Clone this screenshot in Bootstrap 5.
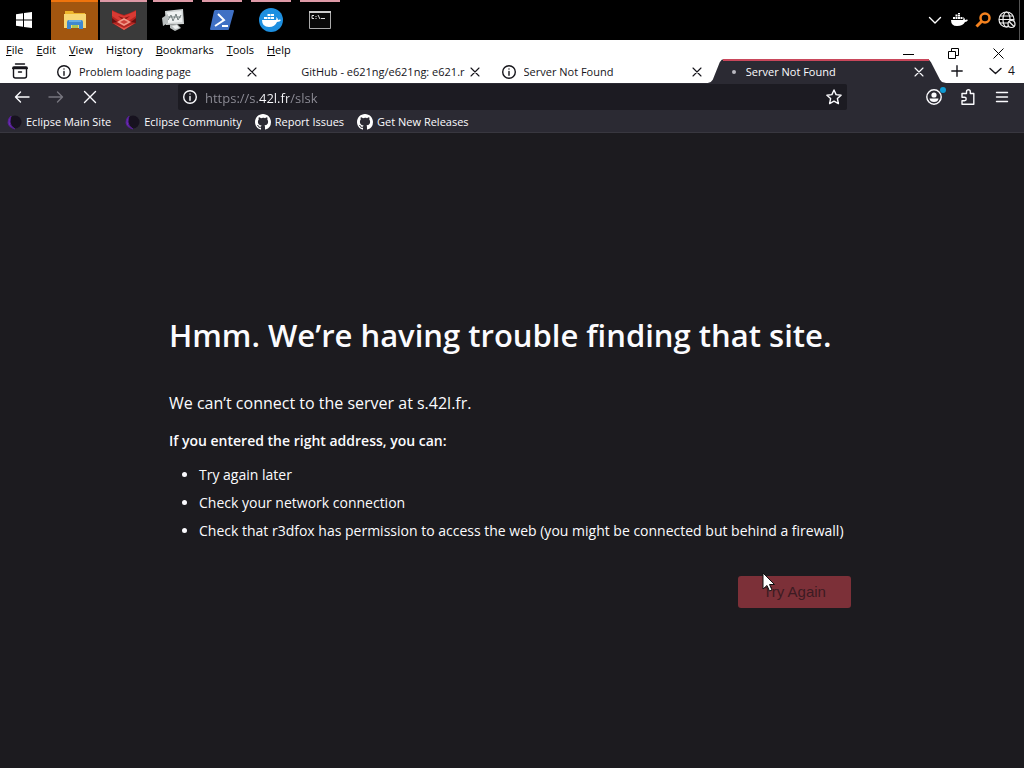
<!DOCTYPE html>
<html lang="en">
<head>
<meta charset="utf-8">
<meta name="viewport" content="width=device-width, initial-scale=1">
<title>Server Not Found</title>
<link href="https://cdn.jsdelivr.net/npm/bootstrap@5.3.0/dist/css/bootstrap.min.css" rel="stylesheet">
<style>
:root{--chrome:#2b2a33;--field:#1c1b22;--accent:#c9475b}
body{font-family:"Open Sans","Noto Sans",sans-serif;font-size:11px;line-height:16px;background:#1c1b1f;color:#fbfbfe}
button{background:none;border:0;padding:0;color:inherit;display:flex;align-items:center;justify-content:center}
svg{display:block;flex:none}
.ln{fill:none;stroke:currentColor;stroke-width:1.4;stroke-linecap:round;stroke-linejoin:round}
.taskbar{height:40px;background:#000;padding-right:4px}
.task{width:47px;height:40px;position:relative}
.task::before{content:"";position:absolute;top:0;left:4px;right:3px;height:2px;background:#dd99a6}
.task.start-btn::before{display:none}
.task.files{background:#a2560f}
.task.files::before{left:0;right:0;background:#f0740c}
.task.fox{background:#3a3a3a}
.task.fox::before{left:0;right:0}
.tray button{width:24px;height:40px}
.tray{border-right:1px solid #555}
.menus{background:#fff;color:#000;height:19px;padding-left:6px}
.menus button{margin-right:13px}
.menus .winbtn{width:45px;height:12px;margin:0}
.tabstrip{background:#fff;color:#15141a;height:24px}
.listall{width:39px;margin-right:6px}
.tab-item{position:relative;padding:1px 9px 0 12px;height:24px;min-width:0}
.tab-item .title{overflow:hidden;white-space:nowrap;flex:1 1 0;min-width:0;text-align:left}
.tab-item .glyph{width:14px;margin-right:8px;flex:none;display:flex;justify-content:center}
.tab-item.cur{color:#fbfbfe;isolation:isolate}
.tab-item.cur::before,.tab-item.cur::after{content:"";position:absolute;z-index:-1;inset:0 -12px 0 -4px;background:var(--chrome);
clip-path:polygon(0 100%,3px 96%,5px 86%,12px 14%,14px 3%,17px 0,calc(100% - 20px) 0,calc(100% - 17px) 3%,calc(100% - 15px) 14%,calc(100% - 6px) 86%,calc(100% - 4px) 96%,100% 100%)}
.tab-item.cur::after{inset:0 5px 22px 11px;background:var(--accent);clip-path:none}
.dot{width:4px;height:4px;border-radius:50%;background:#b9b8c0;margin-left:6px}
.newtab{width:46px}
.alltabs{width:44px;gap:6px;font-size:12px}
.navrow{background:var(--chrome);height:28px;padding:0 5px}
.navrow .tool{width:34px;height:28px;position:relative}
.urlbar{background:var(--field);height:26px;margin:0 70px 0 71px;padding:0 5px;border-radius:2px}
.urlbar input{border:0;outline:0;padding:2px 0 0;height:26px;font-size:13px;min-width:0;
background:linear-gradient(90deg,#8f8e98 0 54px,#fbfbfe 54px 84px,#8f8e98 84px) no-repeat;-webkit-background-clip:text;background-clip:text;-webkit-text-fill-color:transparent}
.notice{position:absolute;right:5px;top:4px;width:6px;height:6px;border-radius:50%;background:#0f9bd3}
.marks{background:var(--chrome);height:22px;padding:0 6px;gap:13px;border-bottom:1px solid #38373f}
.marks a{color:#fbfbfe;text-decoration:none;display:flex;align-items:center;gap:4px;white-space:nowrap}
.message{width:100%;max-width:686px;padding-top:20px}
h1{font-size:31px;line-height:44px;font-weight:600;margin:0 0 34px}
.lede{font-size:16px;line-height:24px;margin:0 0 16px}
.hint{font-size:14px;line-height:20px;font-weight:600;margin:0 0 12px}
.message ul{font-size:14px;line-height:24px;padding-left:30px;margin:0 0 33px}
.message li{margin-bottom:4px}
.message .retry{background:#7c3038;color:#3d1b22;width:113px;height:32px;border-radius:3px;font:15px/20px "Liberation Sans",sans-serif;margin-right:4px;position:relative}
.pointer{position:absolute;left:24px;top:-4px}
</style>
</head>
<body class="d-flex flex-column min-vh-100">
<header>
<div class="taskbar d-flex">
  <button class="task start-btn me-1" aria-label="Start"><svg width="16" height="16" viewBox="0 0 16 16" fill="#fff"><path d="M0 2.3 7 1.3V7.6H0zM8 1.1 16 0V7.6H8zM0 8.4H7V14.7L0 13.7zM8 8.4H16V16L8 14.9z"/></svg></button>
  <div class="d-flex flex-grow-1" style="gap:2px">
  <button class="task files" aria-label="Files"><svg width="24" height="20" viewBox="0 0 24 20"><path fill="#eeb52b" d="M2 1h8l1 2h11v3H2z"/><path fill="#f7d774" d="M1 4h22v14H1z"/><path fill="#3f88d0" d="M4 19v-7q0-2 2-2h12q2 0 2 2v7h-4v-4H8v4z"/><path fill="#67aee6" d="M6 10h12v2H6z"/><path fill="#a9c65a" d="M9 15h6v3H9z"/></svg></button>
  <button class="task fox" aria-label="r3dfox"><svg width="26" height="20" viewBox="0 0 26 20"><path fill="#b32420" d="M1 0 7 3l6 2 6-2 6-3v13l-12 7L1 13z"/><path fill="#d93a33" d="m1 1 12 5 12-5v5l-12 8L1 6z"/><path fill="#8e1916" d="m7 6 6 2 6-2-6 5z"/><path fill="#f29a88" d="m13 8 7 4-7 4-7-4z"/><path fill="#cf4038" d="m13 10 4 2-4 2-4-2z"/><path fill="#641010" d="m1 8 5 4-5 1zM25 8l-5 4 5 1z"/><path fill="#e4584c" d="m2 13 11 5 11-5-11 7z"/></svg></button>
  <button class="task" aria-label="Performance"><svg width="24" height="22" viewBox="0 0 24 22"><path fill="#cfd3d3" d="M4 2 22 0l1 15-18 1z"/><path fill="#eef1f1" d="M6 3.500 20.500 2l.7 11L7 14z"/><path fill="none" stroke="#758080" d="m7 11 3-5 2 6 3-7 2 6 3-5M7 8h13"/><path fill="#b9bebe" d="m1 9 6-4v9l-5 3zM9 16l7-1 4 4-6 3-5-3z"/><path fill="#edf0f0" d="m11 17 5-1 2 3-4 1z"/></svg></button>
  <button class="task" aria-label="PowerShell"><svg width="24" height="20" viewBox="0 0 24 20"><path fill="#3f70c4" d="M5 0h18q1 0 1 1l-5 18q0 1-1 1H1q-1 0-1-1L4 1z"/><path fill="none" stroke="#fff" stroke-width="2" d="m8 4 6 6-9 6M12 16h6"/></svg></button>
  <button class="task" aria-label="Docker"><svg width="24" height="24" viewBox="0 0 24 24"><circle cx="12" cy="12" r="12" fill="#1d8fe0"/><path fill="#fff" d="M3 12h14q1-1 0-3 2 1 2 3 2-1 3 0-1 2-4 2-2 5-8 5-7 0-7-7zM5 9h3v2H5zm3.500 0h3v2h-3zM12 9h3v2h-3zM8.500 6h3v2h-3zM12 6h3v2h-3z"/></svg></button>
  <button class="task" aria-label="Command Prompt"><svg width="24" height="20" viewBox="0 0 24 20"><path fill="#080808" stroke="#aaa" d="M1.500 1.500h21v17h-21z"/><path fill="#ccc" d="M1 1h22v2H1z"/><path fill="none" stroke="#ddd" d="M6 5.500H4v3h2M8 6v1M8 8v1M10 5l2 4M13 8.500h4"/></svg></button>
  </div>
  <div class="tray d-flex text-white">
    <button aria-label="Hidden icons"><svg class="ln" width="14" height="14" viewBox="0 0 14 14"><path d="m1.500 4.500 5.500 5.500 5.500-5.500"/></svg></button>
    <button aria-label="Docker"><svg width="17" height="14" viewBox="0 0 17 14" fill="#fff"><path d="M0 7h12q1-1 0-3 2 1 2 3 2-1 3 0-1 2-3 2-2 4-8 4-6 0-6-6zM2 4h2v2H2zM4.500 4h2v2h-2zM7 4h2v2H7zM9.500 4h2v2h-2zM4.500 1.500h2v2h-2zM7 1.500h2v2H7zM7 0h2v1H7z"/></svg></button>
    <button aria-label="Search everything"><svg width="16" height="16" viewBox="0 0 16 16" fill="none" stroke="#f4821f"><circle cx="10" cy="6" r="4.500" stroke-width="2.500"/><path d="m6.500 9.500-5 5" stroke-width="3"/></svg></button>
    <button aria-label="Network"><svg width="18" height="18" viewBox="0 0 18 18" fill="none" stroke="#eee" stroke-width="1.200"><circle cx="8.500" cy="8.500" r="7.500"/><ellipse cx="8.500" cy="8.500" rx="3.500" ry="7.500"/><path d="M1 8.500h15M2 5h13M2 12h13"/><circle cx="13.500" cy="13" r="3.500" fill="#000"/><path d="m11 10.500 5 5"/></svg></button>
  </div>
</div>

<nav class="menus d-flex" aria-label="Menu bar">
  <button><span><u>F</u>ile</span></button><button><span><u>E</u>dit</span></button><button><span><u>V</u>iew</span></button><button><span>Hi<u>s</u>tory</span></button><button><span><u>B</u>ookmarks</span></button><button><span><u>T</u>ools</span></button><button><span><u>H</u>elp</span></button>
  <div class="d-flex ms-auto align-self-end" style="margin-right:3px">
    <button class="winbtn" aria-label="Minimize"><svg class="ln" width="11" height="11" viewBox="0 0 11 11"><path stroke-width="1" stroke-linecap="butt" d="M0 6.500h11"/></svg></button>
    <button class="winbtn" aria-label="Restore"><svg width="11" height="11" viewBox="0 0 11 11" fill="none" stroke="#000"><path d="M.5 3.500h7v7h-7zM3.500 3V.5h7v7H8"/></svg></button>
    <button class="winbtn" aria-label="Close window"><svg width="11" height="11" viewBox="0 0 11 11" fill="none" stroke="#000"><path d="m.5.5 10 10M10.500.5l-10 10"/></svg></button>
  </div>
</nav>

<div class="tabstrip d-flex">
  <button class="listall" aria-label="Recent browsing"><svg class="ln" width="16" height="16" viewBox="0 0 16 16"><path d="M3.500 1h9M2 4h12q1.300 0 1.300 1.500H.7Q.7 4 2 4zM1.500 5.500V13q0 2 2 2h9q2 0 2-2V5.500M6.500 9h3"/></svg></button>
  <div class="d-flex flex-grow-1" style="min-width:0">
    <div class="tab-item col d-flex align-items-center"><span class="glyph"><svg class="ln" width="14" height="14" viewBox="0 0 14 14"><circle cx="7" cy="7" r="6.300"/><path d="M7 6.500v3.700M7 4v.1"/></svg></span><span class="title">Problem loading page</span><button aria-label="Close tab"><svg class="ln" width="12" height="12" viewBox="0 0 12 12"><path stroke-width="1.100" d="m2 2 8 8M10 2l-8 8"/></svg></button></div>
    <div class="tab-item col d-flex align-items-center"><span class="glyph"></span><span class="title">GitHub - e621ng/e621ng: e621.r</span><button aria-label="Close tab"><svg class="ln" width="12" height="12" viewBox="0 0 12 12"><path stroke-width="1.100" d="m2 2 8 8M10 2l-8 8"/></svg></button></div>
    <div class="tab-item col d-flex align-items-center"><span class="glyph"><svg class="ln" width="14" height="14" viewBox="0 0 14 14"><circle cx="7" cy="7" r="6.300"/><path d="M7 6.500v3.700M7 4v.1"/></svg></span><span class="title">Server Not Found</span><button aria-label="Close tab"><svg class="ln" width="12" height="12" viewBox="0 0 12 12"><path stroke-width="1.100" d="m2 2 8 8M10 2l-8 8"/></svg></button></div>
    <div class="tab-item cur col d-flex align-items-center"><span class="glyph"><span class="dot"></span></span><span class="title">Server Not Found</span><button aria-label="Close tab"><svg class="ln" width="12" height="12" viewBox="0 0 12 12"><path stroke-width="1.100" d="m2 2 8 8M10 2l-8 8"/></svg></button></div>
  </div>
  <button class="newtab" aria-label="New tab"><svg class="ln" width="12" height="12" viewBox="0 0 12 12"><path d="M6 .8v10.400M.8 6h10.400"/></svg></button>
  <button class="alltabs" aria-label="List all tabs, 4 open"><svg class="ln" width="13" height="12" viewBox="0 0 13 12"><path d="m1 3.500 5.500 5L12 3.500"/></svg><span>4</span></button>
</div>

<div class="navrow d-flex align-items-center">
  <button class="tool" aria-label="Back"><svg class="ln" width="16" height="16" viewBox="0 0 16 16"><path d="M15 8H1.500M6.500 3l-5 5 5 5"/></svg></button>
  <button class="tool" aria-label="Forward" style="color:#77767f"><svg class="ln" width="16" height="16" viewBox="0 0 16 16"><path d="M1 8h13.500M9.500 3l5 5-5 5"/></svg></button>
  <button class="tool" aria-label="Stop"><svg class="ln" width="14" height="14" viewBox="0 0 14 14"><path d="m1.500 1.500 11 11M12.500 1.500l-11 11"/></svg></button>
  <div class="urlbar d-flex align-items-center flex-grow-1">
    <button class="me-2" aria-label="Site information"><svg class="ln" width="14" height="14" viewBox="0 0 14 14"><circle cx="7" cy="7" r="6.300"/><path d="M7 6.500v3.700M7 4v.1"/></svg></button>
    <input class="flex-grow-1" type="text" aria-label="Address" value="https://s.42l.fr/slsk">
    <button aria-label="Bookmark this page"><svg class="ln" width="16" height="16" viewBox="0 0 16 16"><path d="m8 1 2.100 4.600 5 .6-3.700 3.400 1 5L8 12.100l-4.400 2.500 1-5L.9 6.200l5-.6z"/></svg></button>
  </div>
  <button class="tool" aria-label="Account"><svg class="ln" width="16" height="16" viewBox="0 0 16 16"><circle cx="8" cy="8" r="7.200"/><circle cx="8" cy="6" r="2.600" fill="currentColor" stroke="none"/><path fill="currentColor" stroke="none" d="M3.500 9.500h9q-.5 3.500-4.500 3.500t-4.500-3.500z"/></svg><span class="notice"></span></button>
  <button class="tool" aria-label="Extensions"><svg class="ln" width="16" height="16" viewBox="0 0 16 16"><path d="M6.500 4.500V2.700a1.900 1.900 0 0 1 3.800 0v1.800h3.500v10.700H2v-3.500h2.500a1.700 1.700 0 0 0 0-3.400H2V4.500z"/></svg></button>
  <button class="tool" aria-label="Application menu"><svg class="ln" width="14" height="14" viewBox="0 0 14 14"><path d="M1.500 2.500h11M1.500 7h11M1.500 11.500h11"/></svg></button>
</div>

<nav class="marks d-flex align-items-center" aria-label="Bookmarks">
  <a href="#main-site"><svg width="16" height="16" viewBox="0 0 16 16"><circle cx="9" cy="8" r="6.500" fill="#17121f"/><path d="M5 2Q1.500 5 2 9q.8 4.500 7 6Q4 12 4 8q0-3 1-6z" fill="#6d2cb8" stroke="#52208d"/></svg>Eclipse Main Site</a>
  <a href="#community"><svg width="16" height="16" viewBox="0 0 16 16"><circle cx="9" cy="8" r="6.500" fill="#17121f"/><path d="M5 2Q1.500 5 2 9q.8 4.500 7 6Q4 12 4 8q0-3 1-6z" fill="#6d2cb8" stroke="#52208d"/></svg>Eclipse Community</a>
  <a href="#issues"><svg width="16" height="16" viewBox="0 0 16 16" fill="#fff"><path d="M8 0C3.580 0 0 3.580 0 8c0 3.540 2.290 6.530 5.470 7.590.4.070.55-.17.55-.38 0-.19-.01-.82-.01-1.490-2.010.37-2.530-.49-2.690-.94-.09-.23-.48-.94-.82-1.130-.28-.15-.68-.52-.01-.53.63-.01 1.080.58 1.230.82.72 1.210 1.870.87 2.330.66.07-.52.28-.87.51-1.070-1.780-.2-3.640-.89-3.640-3.950 0-.87.31-1.590.82-2.150-.08-.2-.36-1.020.08-2.120 0 0 .67-.21 2.200.82A7.700 7.700 0 0 1 8 3.860c.68 0 1.360.09 2 .27 1.530-1.040 2.200-.82 2.200-.82.44 1.100.16 1.920.08 2.120.51.56.82 1.270.82 2.150 0 3.070-1.870 3.750-3.650 3.950.29.25.54.73.54 1.480 0 1.070-.01 1.930-.01 2.200 0 .21.15.46.55.38A8 8 0 0 0 16 8c0-4.420-3.580-8-8-8"/></svg>Report Issues</a>
  <a href="#releases"><svg width="16" height="16" viewBox="0 0 16 16" fill="#fff"><path d="M8 0C3.580 0 0 3.580 0 8c0 3.540 2.290 6.530 5.470 7.590.4.070.55-.17.55-.38 0-.19-.01-.82-.01-1.490-2.010.37-2.530-.49-2.690-.94-.09-.23-.48-.94-.82-1.130-.28-.15-.68-.52-.01-.53.63-.01 1.080.58 1.230.82.72 1.210 1.870.87 2.330.66.07-.52.28-.87.51-1.070-1.780-.2-3.640-.89-3.640-3.950 0-.87.31-1.590.82-2.150-.08-.2-.36-1.020.08-2.120 0 0 .67-.21 2.200.82A7.700 7.700 0 0 1 8 3.860c.68 0 1.360.09 2 .27 1.530-1.040 2.200-.82 2.200-.82.44 1.100.16 1.920.08 2.120.51.56.82 1.270.82 2.150 0 3.070-1.870 3.750-3.650 3.950.29.25.54.73.54 1.480 0 1.070-.01 1.930-.01 2.200 0 .21.15.46.55.38A8 8 0 0 0 16 8c0-4.420-3.580-8-8-8"/></svg>Get New Releases</a>
</nav>
</header>

<main class="flex-grow-1 d-flex align-items-center justify-content-center">
  <section class="message">
    <h1>Hmm. We’re having trouble finding that site.</h1>
    <p class="lede">We can’t connect to the server at s.42l.fr.</p>
    <p class="hint">If you entered the right address, you can:</p>
    <ul>
      <li>Try again later</li>
      <li>Check your network connection</li>
      <li>Check that r3dfox has permission to access the web (you might be connected but behind a firewall)</li>
    </ul>
    <div class="d-flex justify-content-end">
      <button class="retry" type="button">Try Again<svg class="pointer" width="13" height="20" viewBox="0 0 13 20"><path d="M1 1v16l4-3.500 2.500 5.500 2.500-1-2.500-5.500h5z" fill="#fff" stroke="#111"/></svg></button>
    </div>
  </section>
</main>
<script src="https://cdn.jsdelivr.net/npm/bootstrap@5.3.0/dist/js/bootstrap.bundle.min.js"></script>
</body>
</html>
